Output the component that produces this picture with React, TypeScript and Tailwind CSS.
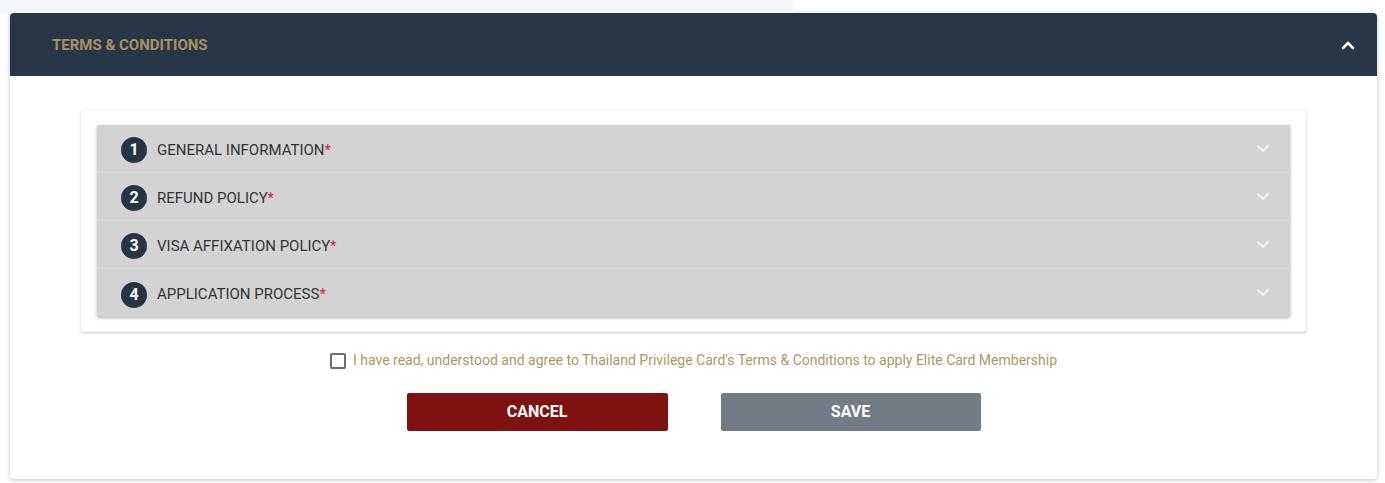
import React from "react";

const items = ["GENERAL INFORMATION", "REFUND POLICY", "VISA AFFIXATION POLICY", "APPLICATION PROCESS"];

function ChevronDown() {
  return (
    <svg width="14" height="10" viewBox="0 0 14 10" className="opacity-90">
      <polyline points="2,2 7,7 12,2" fill="none" stroke="#f3f3f3" strokeWidth="2.4" strokeLinecap="round" strokeLinejoin="round" />
    </svg>
  );
}

export default function App() {
  return (
    <div className="w-[1385px] h-[483px] bg-white overflow-hidden" style={{ fontFamily: "Roboto, 'Liberation Sans', sans-serif" }}>
      <div className="flex h-[13px]">
        <div className="w-[793px] bg-[#f4f6f7]" />
      </div>
      <div className="ml-[10px] mr-[8px] h-[466px] rounded-[4px] bg-white shadow-[0_1px_4px_rgba(0,0,0,0.25)]">
        <div className="h-[63px] rounded-t-[4px] bg-[#283747] flex items-center justify-between pl-[42px] pr-[22px]">
          <span className="text-[15px] font-bold text-[#a89160] mt-[1px]">TERMS &amp; CONDITIONS</span>
          <svg width="14" height="10" viewBox="0 0 14 10">
            <polyline points="2,8 7,3 12,8" fill="none" stroke="#ffffff" strokeWidth="2.6" strokeLinecap="round" strokeLinejoin="round" />
          </svg>
        </div>
        <div className="pl-[71px] pr-[71px] pt-[34px]">
          <div className="rounded-[3px] bg-white px-[16px] py-[15px] shadow-[0_1px_3px_rgba(0,0,0,0.22)]">
            <div className="shadow-[0_1px_3px_rgba(0,0,0,0.3)]">
              {items.map((t, i) => (
                <div
                  key={t}
                  className={`h-[48px] bg-[#d3d3d3] flex items-center justify-between pl-[24px] pr-[20px] ${i < 3 ? "border-b border-[#dadada]" : ""}`}
                >
                  <div className="flex items-center gap-[10px] mt-[3px]">
                    <div className="w-[26px] h-[26px] rounded-full bg-[#263545] text-white text-[16px] font-bold flex items-center justify-center leading-none">
                      {i + 1}
                    </div>
                    <span className="text-[15px] text-[#333333]">
                      {t}
                      <span className="text-[#e0182d]">*</span>
                    </span>
                  </div>
                  <ChevronDown />
                </div>
              ))}
            </div>
          </div>
          <div className="flex items-center justify-center gap-[7px] mt-[18px]">
            <div className="w-[16px] h-[16px] border-2 border-[#6e6e6e] rounded-[2px]" />
            <span className="text-[14px] text-[#a99a62]">
              I have read, understood and agree to Thailand Privilege Card's Terms &amp; Conditions to apply Elite Card Membership
            </span>
          </div>
          <div className="flex justify-center gap-[53px] mt-[22px]">
            <button className="w-[261px] h-[38px] rounded-[2px] bg-[#7f1111] text-white text-[16px] font-bold">CANCEL</button>
            <button className="w-[260px] h-[38px] rounded-[2px] bg-[#737b87] text-white text-[16px] font-bold">SAVE</button>
          </div>
        </div>
      </div>
    </div>
  );
}
